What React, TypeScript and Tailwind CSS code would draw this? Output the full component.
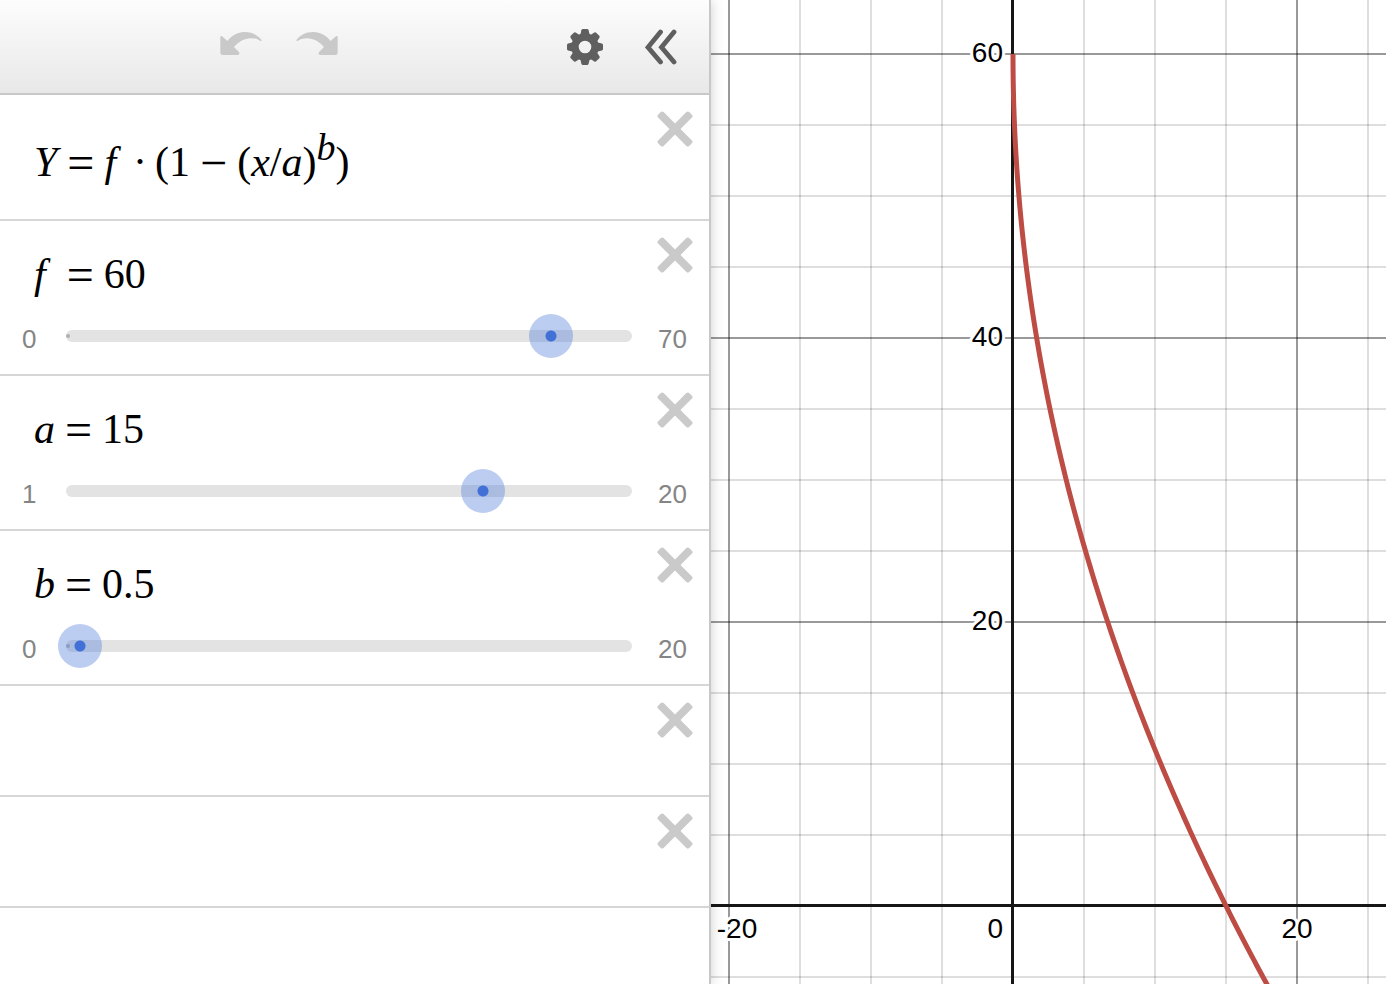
import { ReactNode, useState } from "react";

const UNIT = 14.2; // pixels per graph unit
const GRID = Array.from({ length: 81 }, (_, i) => (i - 40) * 5);

const ArrowIcon = ({ flip }: { flip?: boolean }) => (
  <svg className={`h-[34px] w-11 ${flip ? "-scale-x-100" : ""}`} viewBox="0 0 132 102" aria-hidden="true">
    <path
      fill="#c9c9c9"
      d="M9 18.500 L25.500 33 C38 17 55 6 77 6 C101 6 117 16 127.500 30 Q128.500 34 124 33 C117 27 107 24.500 97 24.500 C74 25 58 36 45 51 L60.500 67 Q63 75 56 75 L11 75 Q4 75 4 68 L4 21 Q5 16 9 18.500 Z"
    />
  </svg>
);

const GearIcon = () => (
  <svg className="size-9" viewBox="-18 -18 36 36" aria-hidden="true">
    <circle r="10" fill="none" stroke="#5f5f5f" strokeWidth="7.400" />
    {[0, 45, 90, 135, 180, 225, 270, 315].map((deg) => (
      <path
        key={deg}
        transform={`rotate(${deg})`}
        fill="#5f5f5f"
        d="M-5 -11 L-3.600 -16.800 Q-3.200 -18 -2.200 -18 H2.200 Q3.200 -18 3.600 -16.800 L5 -11 Z"
      />
    ))}
  </svg>
);

const CollapseIcon = () => (
  <svg className="h-9 w-8" viewBox="0 0 32 36" fill="none" stroke="#5f5f5f" strokeWidth="4.800" strokeLinecap="round" aria-hidden="true">
    <path d="M15.500 3 L3 18.300 L15.500 33" />
    <path d="M29 3 L16.500 18.300 L29 33" />
  </svg>
);

const CloseIcon = () => (
  <svg className="size-9" viewBox="-18 -18 36 36" fill="#cacaca" aria-hidden="true">
    <rect x="-22" y="-3.900" width="44" height="7.800" rx="2" transform="rotate(45)" />
    <rect x="-22" y="-3.900" width="44" height="7.800" rx="2" transform="rotate(-45)" />
  </svg>
);

const Op = ({ children }: { children: ReactNode }) => (
  <span className="mx-[10px] align-[-3px] text-5xl leading-0">{children}</span>
);

const Var = ({ name }: { name: string }) => (
  <i className={name === "f" ? "mr-[11px]" : ""}>{name}</i>
);

const MathLine = ({ children }: { children?: ReactNode }) => (
  <div className="pl-[34px] font-['Liberation_Serif',serif] text-[42px] leading-[48px] whitespace-nowrap text-black">
    {children}
  </div>
);

const DeleteButton = () => (
  <button type="button" aria-label="Delete expression" className="shrink-0">
    <CloseIcon />
  </button>
);

type SliderRowProps = {
  name: string;
  min: number;
  max: number;
  step: number;
  value: number;
  onChange: (value: number) => void;
};

const SliderRow = ({ name, min, max, step, value, onChange }: SliderRowProps) => (
  <li className="border-b-2 border-[#d6d6d6] pt-4 pb-4">
    <div className="flex h-[77px] items-start justify-between pr-4">
      <div className="pt-[13px]">
        <MathLine>
          <Var name={name} />
          <Op>=</Op>
          {value}
        </MathLine>
      </div>
      <DeleteButton />
    </div>

    <div className="flex h-11 items-center text-[26px] leading-8 text-[#858585]">
      <span className="w-[66px] shrink-0 pt-[6px] pl-[22px]">{min}</span>
      <div className="relative h-3 grow rounded-full bg-[#e3e3e3]">
        {min === 0 && <span className="absolute top-1 left-0 size-1 rounded-full bg-[#b0b0b0]" />}
        <input
          type="range"
          aria-label={name}
          className="absolute -inset-x-[22px] -top-4 h-11 w-[calc(100%+44px)] cursor-pointer appearance-none bg-transparent [&::-webkit-slider-thumb]:size-11 [&::-webkit-slider-thumb]:appearance-none [&::-webkit-slider-thumb]:rounded-full [&::-webkit-slider-thumb]:bg-[radial-gradient(circle,#4171d6_5px,rgba(80,125,218,0.39)_6px)]"
          min={min}
          max={max}
          step={step}
          value={value}
          onChange={(e) => onChange(Number(e.target.value))}
        />
      </div>
      <span className="w-[77px] shrink-0 pt-[6px] pl-[26px]">{max}</span>
    </div>
  </li>
);

const EmptyRow = () => (
  <li className="flex h-[111px] items-start justify-end border-b-2 border-[#d6d6d6] pt-4 pr-4">
    <DeleteButton />
  </li>
);

const Graph = ({ f, a, b }: { f: number; a: number; b: number }) => {
  // Denser samples near zero, where the curve is steepest
  const points: string[] = [];
  for (let i = 0; i <= 300; i++) {
    const x = 30 * (i / 300) ** 2;
    const y = f * (1 - (x / a) ** b);
    if (y < -200) break;
    points.push(`${(x * UNIT).toFixed(2)},${(-y * UNIT).toFixed(2)}`);
  }

  return (
    <svg className="block h-full w-full" role="img" aria-label="Graph of Y">
      <g transform="translate(302 906)">
        {GRID.filter((v) => v !== 0).map((v) => (
          <g key={v} stroke="#000" strokeWidth="2" strokeOpacity={v % 20 === 0 ? 0.4 : 0.13}>
            <line x1={v * UNIT} x2={v * UNIT} y1={-3000} y2={3000} />
            <line x1={-3000} x2={3000} y1={-v * UNIT} y2={-v * UNIT} />
          </g>
        ))}

        {/* Axes */}
        <g stroke="#161616" strokeWidth="3">
          <line x1={-0.5} x2={-0.5} y1={-3000} y2={3000} />
          <line x1={-3000} x2={3000} y1={-0.5} y2={-0.5} />
        </g>

        <polyline points={points.join(" ")} fill="none" stroke="#bd4c44" strokeWidth="5" strokeLinejoin="round" />

        {/* Axis labels */}
        <g
          className="font-['Liberation_Sans',Arial,sans-serif] text-[28px]"
          fill="#000"
          stroke="#fff"
          strokeWidth="6"
          strokeLinejoin="round"
          paintOrder="stroke"
        >
          {[20, 40, 60].map((v) => (
            <text key={v} x={-10} y={-v * UNIT + 8} textAnchor="end">
              {v}
            </text>
          ))}
          <text x={-10} y={32} textAnchor="end">0</text>
          <text x={284} y={32} textAnchor="middle">20</text>
          <text x={-276} y={32} textAnchor="middle">-20</text>
        </g>
      </g>
    </svg>
  );
};

const App = () => {
  const [f, setF] = useState(60);
  const [a, setA] = useState(15);
  const [b, setB] = useState(0.5);

  return (
    <div className="grid h-screen grid-cols-[711fr_675fr] overflow-hidden bg-white font-['Liberation_Sans',Arial,sans-serif]">
      <aside className="z-10 min-w-0 border-r-2 border-[#c8c8c8] bg-white shadow-[0_0_12px_rgba(0,0,0,0.2)]">
        {/* Toolbar */}
        <header className="flex h-[95px] items-center justify-between border-b-2 border-[#c8c8c8] bg-linear-to-b from-[#fdfdfd] to-[#e8e8e8] pr-8 pl-[219px]">
          <div className="flex gap-8">
            <button type="button" aria-label="Undo">
              <ArrowIcon />
            </button>
            <button type="button" aria-label="Redo">
              <ArrowIcon flip />
            </button>
          </div>
          <div className="flex gap-[42px]">
            <button type="button" aria-label="Edit list">
              <GearIcon />
            </button>
            <button type="button" aria-label="Hide list">
              <CollapseIcon />
            </button>
          </div>
        </header>

        {/* Expressions */}
        <ul>
          <li className="flex h-[126px] items-start justify-between border-b-2 border-[#d6d6d6] pt-4 pr-4">
            <div className="pt-[27px]">
              <MathLine>
                <Var name="Y" />
                <Op>=</Op>
                <Var name="f" />
                <span className="mr-2 ml-[6px]">·</span>(1
                <Op>−</Op>(<Var name="x" />/<Var name="a" />)
                <sup className="-top-4 text-[38px] leading-0">
                  <Var name="b" />
                </sup>
                )
              </MathLine>
            </div>
            <DeleteButton />
          </li>
          <SliderRow name="f" min={0} max={70} step={1} value={f} onChange={setF} />
          <SliderRow name="a" min={1} max={20} step={1} value={a} onChange={setA} />
          <SliderRow name="b" min={0} max={20} step={0.1} value={b} onChange={setB} />
          <EmptyRow />
          <EmptyRow />
        </ul>
      </aside>

      <main className="min-w-0 overflow-hidden">
        <Graph f={f} a={a} b={b} />
      </main>
    </div>
  );
};

export default App;
